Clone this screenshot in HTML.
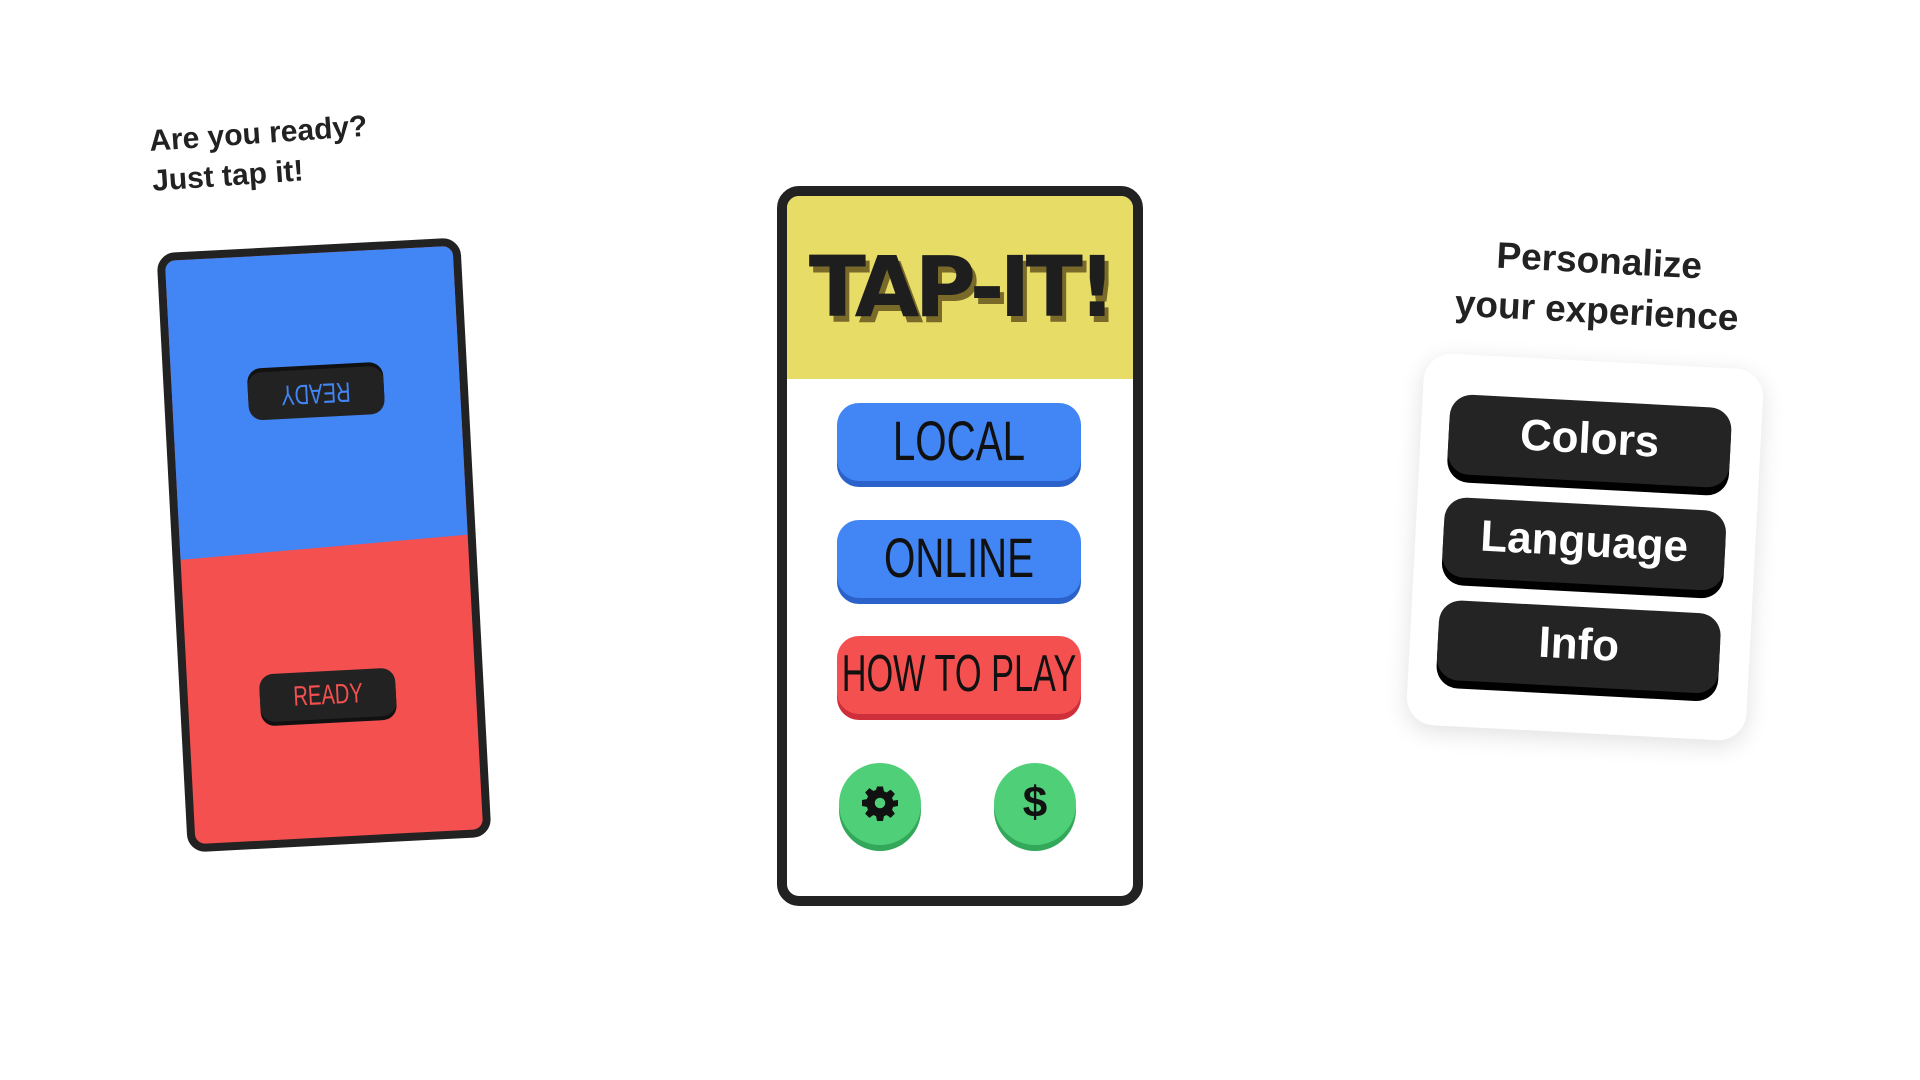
<!DOCTYPE html>
<html><head><meta charset="utf-8"><style>
*{margin:0;padding:0;box-sizing:border-box}
body{width:1920px;height:1080px;background:#fff;position:relative;overflow:hidden;font-family:"Liberation Sans",sans-serif}
.abs{position:absolute}
.cap{font-weight:bold;color:#222;font-size:30px;line-height:40px}
.lp{left:172px;top:245px;width:304px;height:600px;transform:rotate(-3deg);border:8px solid #222;border-radius:18px;overflow:hidden;background:#f55050}
.lp .blue{position:absolute;left:-20px;top:-20px;width:360px;height:320px;background:#4285f4;transform:rotate(-2deg);transform-origin:left bottom}
.pill{position:absolute;width:136px;height:48px;background:#222;border-radius:14px;box-shadow:0 4px 0 #111;text-align:center;line-height:48px}
.pill span{display:inline-block;transform:scaleX(0.72);white-space:nowrap;font-size:28px}
.btn span{display:block;width:400px;margin-left:-78px;text-align:center;transform:scaleX(0.72);white-space:nowrap}
.mp{left:777px;top:186px;width:366px;height:720px;border:10px solid #222;border-radius:22px;overflow:hidden;background:#fff}
.hdr{height:183px;background:#e6dc66;text-align:center;font-family:"DejaVu Sans",sans-serif;font-weight:900;font-size:84px;color:#1e1e1e;line-height:183px;letter-spacing:-5px;text-shadow:4px 6px 0 #7a6a2a}
.btn{position:absolute;left:50px;width:244px;height:78px;border-radius:22px;font-size:56px;line-height:76px;color:#111}
.b{background:#4285f4;box-shadow:0 6px 0 #2a62c9}
.r{background:#f55050;box-shadow:0 6px 0 #cf2f3a}
.c{position:absolute;width:82px;height:82px;border-radius:50%;background:#4fcf78;box-shadow:0 6px 0 #33a85a;text-align:center;line-height:80px;font-weight:bold;font-size:44px;color:#111}
.card{left:1415px;top:361px;width:340px;height:372px;background:#fff;border-radius:28px;box-shadow:0 6px 24px rgba(0,0,0,0.12);transform:rotate(3deg)}
.db{position:absolute;left:28px;width:282px;height:80px;background:#242424;border-radius:22px;box-shadow:0 8px 0 #000;color:#fff;font-weight:bold;font-size:44px;text-align:center;line-height:76px}
</style></head><body>
<div class="abs cap" style="left:148px;top:122px;transform:rotate(-4deg);transform-origin:left top">Are you ready?<br>Just tap it!</div>
<div class="abs lp"><div class="blue"></div>
<div class="pill" style="left:76px;top:116px;color:#4285f4;transform:rotate(180deg)"><span>READY</span></div>
<div class="pill" style="left:72px;top:418px;color:#f55050"><span>READY</span></div></div>
<div class="abs mp"><div class="hdr">TAP-IT!</div>
<div class="btn b" style="top:207px"><span>LOCAL</span></div>
<div class="btn b" style="top:324px"><span>ONLINE</span></div>
<div class="btn r" style="top:440px;font-size:52px"><span style="transform:scaleX(0.66)">HOW TO PLAY</span></div>
<div class="c" style="left:52px;top:567px"><svg width="36" height="36" viewBox="0 0 24 24" style="margin-top:22px"><path fill="#111" d="M10 1h4l.6 3.2 1.8.8 2.7-1.9 2.8 2.8-1.9 2.7.8 1.8L24 10v4l-3.2.6-.8 1.8 1.9 2.7-2.8 2.8-2.7-1.9-1.8.8L14 24h-4l-.6-3.2-1.8-.8-2.7 1.9-2.8-2.8 1.9-2.7-.8-1.8L0 14v-4l3.2-.6.8-1.8-1.9-2.7 2.8-2.8 2.7 1.9 1.8-.8zM12 8.5a3.5 3.5 0 1 0 0 7 3.5 3.5 0 0 0 0-7z"/></svg></div>
<div class="c" style="left:207px;top:567px">$</div></div>
<div class="abs cap" style="left:1428px;top:236px;width:340px;text-align:center;font-size:37px;line-height:50px;transform:rotate(3deg)">Personalize<br>your experience</div>
<div class="abs card">
<div class="db" style="top:40px">Colors</div>
<div class="db" style="top:143px">Language</div>
<div class="db" style="top:246px">Info</div></div>
</body></html>
